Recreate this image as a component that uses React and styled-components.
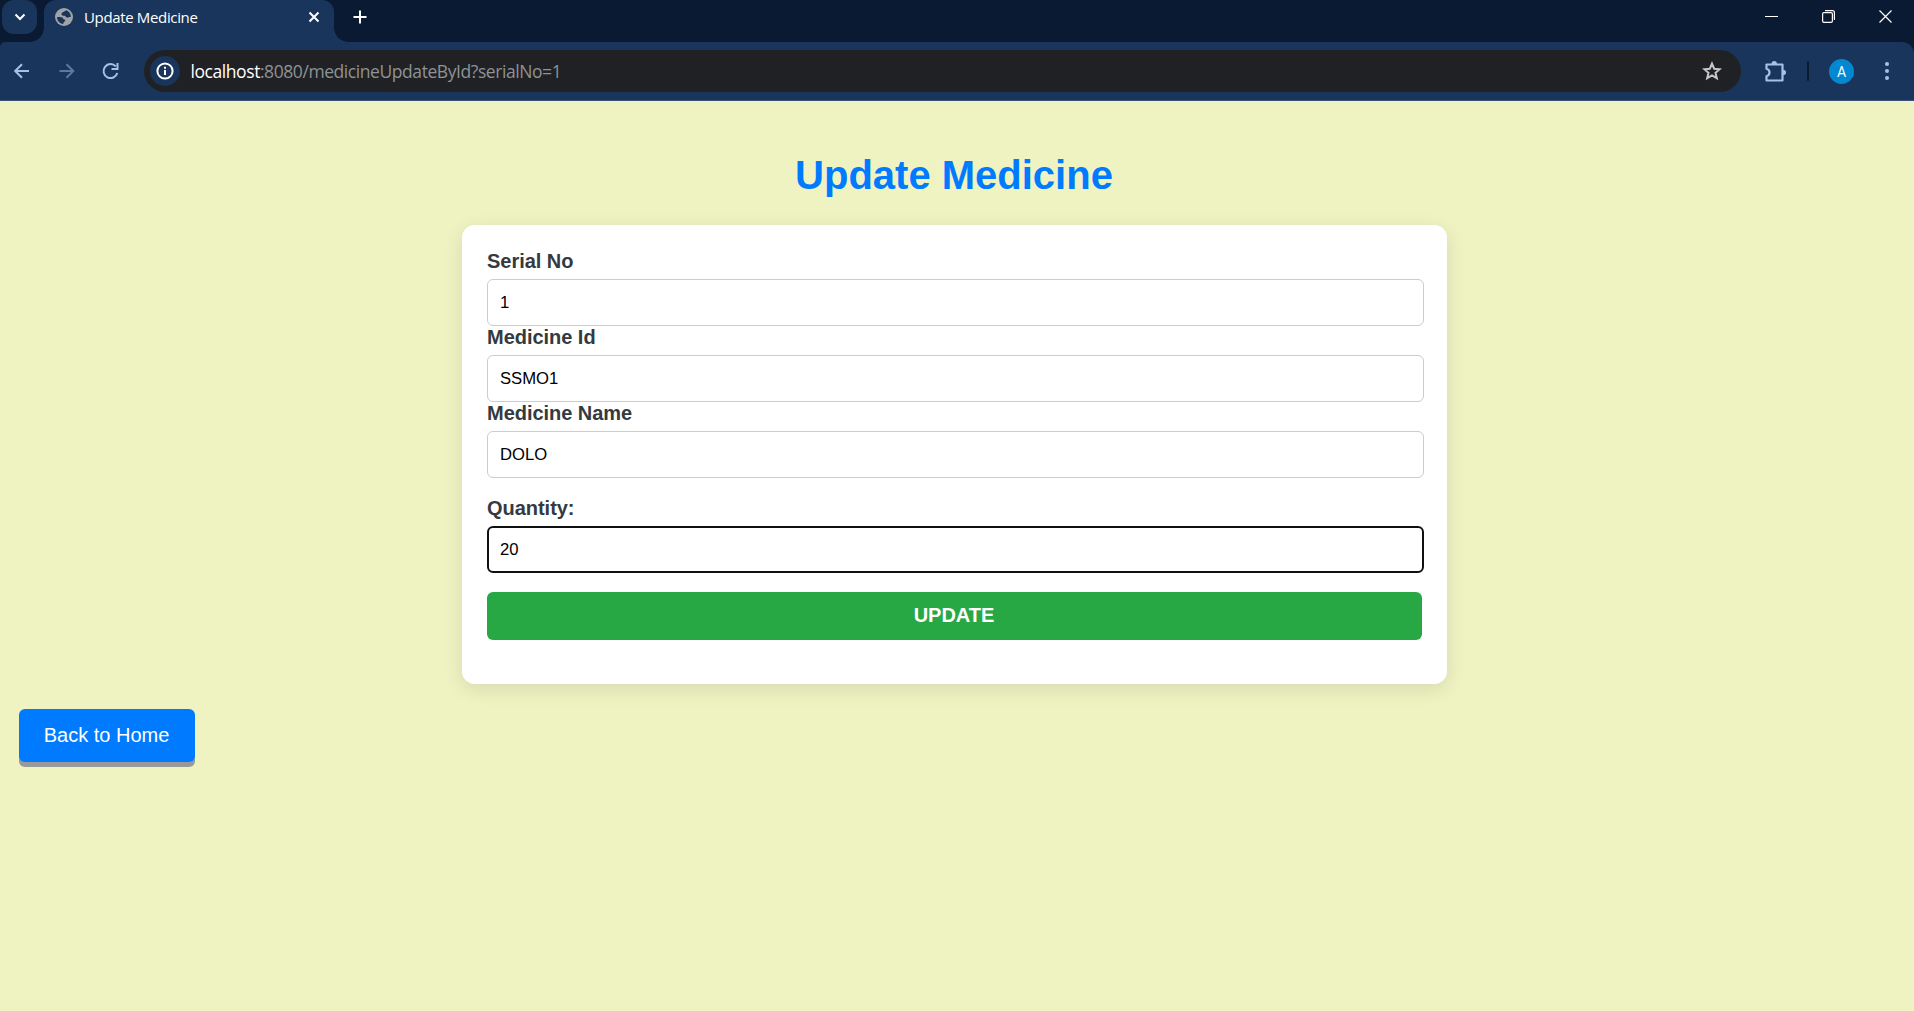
import React from 'react';
import styled, { createGlobalStyle } from 'styled-components';

const Global = createGlobalStyle`
  *, *::before, *::after { box-sizing: border-box; }
  html, body { margin: 0; padding: 0; }
  body { background: #eff3c2; font-family: "Liberation Sans", Arial, sans-serif; overflow: hidden; }
`;

const Window = styled.div`
  display: flex;
  flex-direction: column;
  height: 1011px;
  background: #eff3c2;
`;

const TabStrip = styled.div`
  display: flex;
  height: 42px;
  flex: none;
  background: #0a1a32;
  padding-left: 2px;
`;

const TabSearch = styled.div`
  width: 35px;
  height: 34px;
  margin-right: 7px;
  border-radius: 12px;
  background: #1a355b;
  display: flex;
  align-items: center;
  justify-content: center;
`;

const Tab = styled.div`
  position: relative;
  display: flex;
  align-items: center;
  width: 290px;
  height: 42px;
  padding: 0 14px 8px 11px;
  border-radius: 12px 12px 0 0;
  background: #1a355b;
  &::before, &::after {
    content: "";
    position: absolute;
    bottom: 0;
    width: 14px;
    height: 14px;
  }
  &::before { left: -14px; background: radial-gradient(circle at 0 0, transparent 13.5px, #1a355b 14px); }
  &::after { right: -14px; background: radial-gradient(circle at 100% 0, transparent 13.5px, #1a355b 14px); }
`;

const TabTitle = styled.span`
  flex: 1;
  margin-left: 11px;
  padding-bottom: 1px;
  font: 15px "Open Sans", "Noto Sans", sans-serif;
  letter-spacing: -0.35px;
  color: #fff;
  white-space: nowrap;
`;

const NewTab = styled.div`
  width: 34px;
  height: 34px;
  margin-left: 9px;
  display: flex;
  align-items: center;
  justify-content: center;
`;

const WindowControls = styled.div`
  display: flex;
  align-items: center;
  height: 33px;
  margin-left: auto;
  padding-right: 22px;
  gap: 44px;
`;

const ToolbarBack = styled.div`
  flex: none;
  background: #0a1a32;
`;

const Toolbar = styled.div`
  display: flex;
  align-items: center;
  height: 59px;
  padding: 0 25px 0 12px;
  border-radius: 5px 12px 0 0;
  border-bottom: 1px solid #37527a;
  background: #1a355b;
`;

const NavIcons = styled.div`
  display: flex;
  align-items: center;
  gap: 24.5px;
  width: 132px;
`;

const Omnibox = styled.div`
  display: flex;
  align-items: center;
  width: 1597px;
  height: 42px;
  padding: 0 19px 0 6px;
  border-radius: 21px;
  background: #202124;
`;

const SiteInfo = styled.div`
  display: flex;
  align-items: center;
  justify-content: center;
  width: 30px;
  height: 30px;
  border-radius: 50%;
  background: #1a355b;
`;

const Url = styled.div`
  flex: 1;
  margin-left: 10.5px;
  font: 17.5px "Open Sans", "Noto Sans", sans-serif;
  letter-spacing: -0.43px;
  color: #8f9296;
  white-space: nowrap;
`;

const Host = styled.span`
  color: #fff;
`;

const ToolbarEnd = styled.div`
  display: flex;
  align-items: center;
  margin-left: auto;
`;

const Divider = styled.div`
  width: 2px;
  height: 20px;
  margin: 0 20px 0 21px;
  border-radius: 1px;
  background: #0a1a32;
`;

const Avatar = styled.div`
  width: 25px;
  height: 25px;
  margin-right: 31px;
  border-radius: 50%;
  background: #0288d1;
  color: #fff;
  font: 400 14px/26px Roboto, sans-serif;
  text-align: center;
`;

const Page = styled.main`
  display: flex;
  flex-direction: column;
`;

const Title = styled.h1`
  align-self: center;
  margin: 51px 6px 0 0;
  height: 73px;
  font-size: 40px;
  line-height: 46px;
  font-weight: bold;
  color: #007bff;
`;

const Card = styled.form`
  display: flex;
  flex-direction: column;
  width: 985px;
  height: 459px;
  margin-left: 462px;
  padding: 25px 23px 0 25px;
  border-radius: 12.5px;
  background: #fff;
  box-shadow: 0 5px 18.75px rgba(0, 0, 0, 0.1);
`;

const Field = styled.div`
  margin-top: ${(p) => p.$gap || 0}px;
`;

const Label = styled.label`
  display: block;
  height: 29px;
  font-size: 20px;
  line-height: 23px;
  letter-spacing: -0.03px;
  font-weight: bold;
  color: #343a40;
`;

const Input = styled.input`
  display: block;
  width: 937px;
  height: 47px;
  padding: 0 12px;
  border: 1px solid #ccc;
  border-radius: 6px;
  background: #fff;
  font: 16.67px "Liberation Sans", Arial, sans-serif;
  color: #000;
  outline: none;
  ${(p) => p.$active && 'border: 2px solid #101010; padding: 0 11px;'}
`;

const Submit = styled.button`
  width: 935px;
  height: 48px;
  margin-top: 19px;
  padding: 0 1px 1px 0;
  border: 0;
  border-radius: 6px;
  background: #28a745;
  color: #fff;
  font: bold 20px "Liberation Sans", Arial, sans-serif;
`;

const HomeButton = styled.button`
  width: 176px;
  height: 53px;
  margin: 25px 0 0 19px;
  padding: 0 1px 0 0;
  border: 0;
  border-radius: 6px;
  background: #007bff;
  box-shadow: 0 5px #999;
  color: #fff;
  font: 20px "Liberation Sans", Arial, sans-serif;
`;

const Svg = styled.svg`
  flex: none;
  display: block;
`;

const Icon = ({ w, h = w, color = '#fff', stroke = 2, box, children }) => (
  <Svg width={w} height={h} viewBox={box || `0 0 ${w} ${h}`} fill="none" stroke={color} strokeWidth={stroke}>
    {children}
  </Svg>
);

const fields = [
  { label: 'Serial No', value: '1' },
  { label: 'Medicine Id', value: 'SSMO1' },
  { label: 'Medicine Name', value: 'DOLO' },
  { label: 'Quantity:', value: '20', gap: 19, active: true },
];

export default function App() {
  return (
    <Window>
      <Global />
      <TabStrip>
        <TabSearch>
          <Icon w={12} h={8}><path d="M1.500 1.500 6 6l4.500-4.500" /></Icon>
        </TabSearch>
        <Tab>
          <Icon w={18} color="none">
            <circle cx="9" cy="9" r="9" fill="#a0a4a9" />
            <path fill="#1a355b" d="M11.200 2.200C9.800 2.600 9.500 3.600 8.200 4 6.800 4.400 6.400 5.400 6.600 6.600c.2 1 1.400 1.200 2.600 1.200 1.500 0 1.600 1.600 2.800 1.800 1.200.2 2.200-.8 3.900-.6C16 5.700 14 3.100 11.200 2.200z" />
            <path fill="#1a355b" d="M2 9c2-.2 4.500-.2 5.500.6 1 .9.500 1.800 1.700 2 1.600.2 1.500 1.400.3 2-.9.400-.9 1.400-1.300 2.300C4.600 15.600 2 12.700 2 9z" />
          </Icon>
          <TabTitle>Update Medicine</TabTitle>
          <Icon w={12}><path d="M1.500 1.500l9 9M10.500 1.500l-9 9" /></Icon>
        </Tab>
        <NewTab>
          <Icon w={14}><path d="M7 .5v13M.5 7h13" /></Icon>
        </NewTab>
        <WindowControls>
          <Icon w={13} stroke={1}><path d="M0 6.500h13" /></Icon>
          <Icon w={13} stroke={1.2}><path d="M.6 4q0-1.400 1.400-1.400h7q1.400 0 1.400 1.400v7q0 1.400-1.400 1.400H2Q.6 12.400.6 11zM3 .6h7.400q2 0 2 2V10" /></Icon>
          <Icon w={13} stroke={1.2}><path d="M.5.5l12 12M12.500.5l-12 12" /></Icon>
        </WindowControls>
      </TabStrip>
      <ToolbarBack>
        <Toolbar>
          <NavIcons>
            <Icon w={20} color="#a8c0e8"><path d="M17 10H3.500M10 3.200 3.200 10l6.800 6.800" /></Icon>
            <Icon w={20} color="#5d779f"><path d="M2.500 10h13.500M9.500 3.200l6.800 6.800-6.800 6.800" /></Icon>
            <Icon w={20} color="#a8c0e8"><path d="M14.800 5.400A7 7 0 1 0 16.300 12M16.500 2v6h-6" /></Icon>
          </NavIcons>
          <Omnibox>
            <SiteInfo>
              <Icon w={18}><circle cx="9" cy="9" r="7.600" /><path d="M9 8v5M9 4.800v2" /></Icon>
            </SiteInfo>
            <Url><Host>localhost</Host>:8080/medicineUpdateById?serialNo=1</Url>
            <Icon w={20} color="#c7c7c7" stroke={2}><path d="M10 2.600l2.200 5.100 5.500.5-4.200 3.600 1.300 5.400-4.800-2.900-4.800 2.900 1.300-5.400-4.200-3.600 5.500-.5z" /></Icon>
          </Omnibox>
          <ToolbarEnd>
            <Icon w={21} color="#a8c0e8" stroke={2.2}><path d="M1.500 3.500h16v16h-16v-4.300q3-.8 3-3.700t-3-3.700z" strokeLinejoin="round" /><path fill="#a8c0e8" stroke="none" d="M6.500 3q0-3 2.700-3T12 3zM18 8.700q3 0 3 2.800T18 14.300z" /></Icon>
            <Divider />
            <Avatar>A</Avatar>
            <Icon w={4} h={18} color="none"><g fill="#a8c0e8"><circle cx="2" cy="2" r="2" /><circle cx="2" cy="9" r="2" /><circle cx="2" cy="16" r="2" /></g></Icon>
          </ToolbarEnd>
        </Toolbar>
      </ToolbarBack>
      <Page>
        <Title>Update Medicine</Title>
        <Card>
          {fields.map((f) => (
            <Field key={f.label} $gap={f.gap}>
              <Label>{f.label}</Label>
              <Input defaultValue={f.value} $active={f.active} />
            </Field>
          ))}
          <Submit type="button">UPDATE</Submit>
        </Card>
        <HomeButton>Back to Home</HomeButton>
      </Page>
    </Window>
  );
}
